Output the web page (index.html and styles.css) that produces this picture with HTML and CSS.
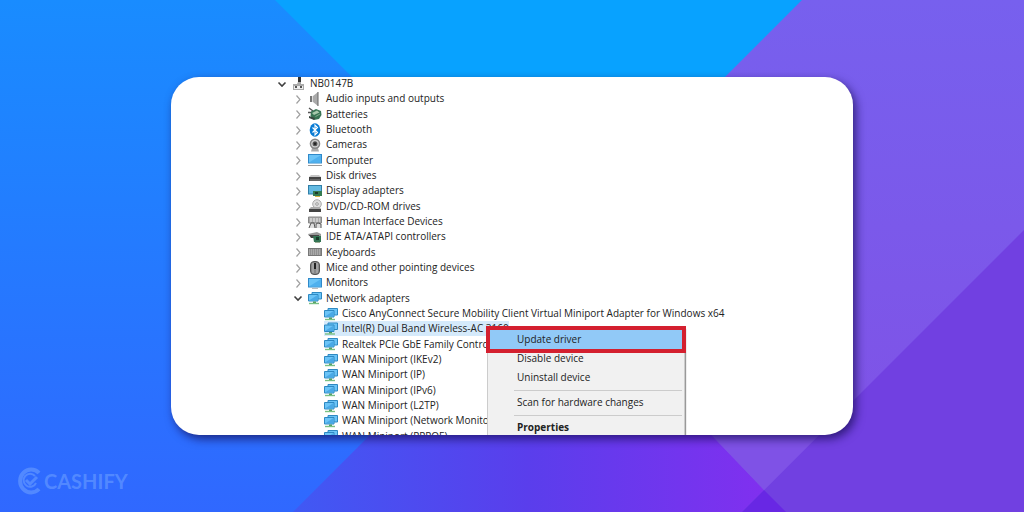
FILE: index.html
```html
<!DOCTYPE html>
<html lang="en">
<head>
  <meta charset="UTF-8" />
  <meta name="viewport" content="width=device-width, initial-scale=1.0" />
  <title>Device Manager - Update driver</title>
  <link rel="stylesheet" href="styles.css">
</head>
<body>
  <!-- Coloured backdrop -->
  <svg class="backdrop" viewBox="0 0 1024 512" preserveAspectRatio="none" aria-hidden="true">
    <defs>
      <linearGradient id="gLeft" x1="0" y1="0" x2="0" y2="1">
        <stop offset="0" stop-color="#198cff"/><stop offset="1" stop-color="#3068ff"/>
      </linearGradient>
      <linearGradient id="gRight" x1="0" y1="0" x2="0" y2="1">
        <stop offset="0" stop-color="#7760ee"/><stop offset="1" stop-color="#8050e5"/>
      </linearGradient>
      <linearGradient id="gBottom" gradientUnits="userSpaceOnUse" x1="293" y1="0" x2="763" y2="0">
        <stop offset="0" stop-color="#4059f4"/><stop offset="0.5" stop-color="#5a3eec"/><stop offset="1" stop-color="#8030ef"/>
      </linearGradient>
    </defs>
    <rect width="1024" height="512" fill="url(#gLeft)"/>
    <path d="M275 0H802L620 190H465Z" fill="#08a2ff"/>
    <path d="M802 0H1024V512H742L600 370V202Z" fill="url(#gRight)"/>
    <path d="M1024 230V512H742Z" fill="#7140e1"/>
    <path d="M293 512L405 400H678L764 490L742 512Z" fill="url(#gBottom)"/>
    <path d="M678 400H854L764 490Z" fill="#7f52e6"/>
    <path d="M764 490L786 512H742Z" fill="#6827e4"/>
  </svg>

  <!-- Device icons -->
  <svg class="sprite" aria-hidden="true">
    <symbol id="open" viewBox="0 0 12 12"><path d="M2.500 4.500L6 8L9.500 4.500" fill="none" stroke="#404040" stroke-width="1.600"/></symbol>
    <symbol id="closed" viewBox="0 0 12 12"><path d="M4.500 2.500L8 6.500L4.500 10.500" fill="none" stroke="#a0a0a0" stroke-width="1.200"/></symbol>
    <symbol id="pc" viewBox="0 0 14 14"><path d="M6 0H9V7H6Z" fill="#333"/><path d="M1 7H5L6 5H9V7H12V13H1Z" fill="#aaa"/><path d="M2 9H11V12H2Z" fill="#eee"/><path d="M3 9H5V11H3ZM8 9H10V11H8Z" fill="#555"/></symbol>
    <symbol id="audio" viewBox="0 0 14 14"><path d="M2 4H5V10H2Z" fill="#777"/><path d="M5 4L10 0V14L5 10Z" fill="#aaa"/><path d="M10 0V14" stroke="#666"/><path d="M4.500 4V10" stroke="#ddd"/></symbol>
    <symbol id="battery" viewBox="0 0 14 14"><path d="M1 1L5 4M0 5.500H4" stroke="#555" stroke-width="1.400"/><path d="M3 4.500L8 2L13 4L13.500 8L11 12L6 13L2.500 9Z" fill="#397454"/><path d="M4 6L9 3.500L11.500 5.500L6 8Z" fill="#a9c9ad"/><path d="M1 9L7 11L6 13L1 11Z" fill="#39463f"/><path d="M7.500 9.500L12 7" stroke="#83ad8c"/></symbol>
    <symbol id="bluetooth" viewBox="0 0 14 14"><ellipse cx="7" cy="7" rx="5.300" ry="6.800" fill="#087bd4"/><path d="M4.500 4.500L9.500 9.500L7 12V2L9.500 4.500L4.500 9.500" fill="none" stroke="#fff" stroke-width="1.100"/></symbol>
    <symbol id="camera" viewBox="0 0 14 14"><path d="M4 10H10L11 13.500H3Z" fill="#aaa"/><circle cx="7" cy="5.800" r="5.300" fill="#858585"/><circle cx="7" cy="5.800" r="3.800" fill="#d0d0d0"/><circle cx="7" cy="5.800" r="2.500" fill="#555"/><circle cx="7" cy="5.800" r="1.200" fill="#222"/></symbol>
    <symbol id="computer" viewBox="0 0 14 14"><path d="M0 1H14V10.500H0Z" fill="#3089c9"/><path d="M1 2H13V9.500H1Z" fill="#6bc4f7"/><path d="M1 9.500L13 2V9.500Z" fill="#4fb0ee"/><path d="M0 12.500H14" stroke="#999"/></symbol>
    <symbol id="disk" viewBox="0 0 14 14"><path d="M3 6H11L13 8H1Z" fill="#c5c5c5"/><path d="M1 8H13V12H1Z" fill="#444"/><path d="M2 11H12" stroke="#888"/></symbol>
    <symbol id="display" viewBox="0 0 14 14"><path d="M0 1H14V10.500H0Z" fill="#317fa8"/><path d="M1 2H13V9.500H1Z" fill="#63bae2"/><path d="M5 7H14V12H5Z" fill="#347b50"/><path d="M7 8H10V10H7Z" fill="#1d392a"/><path d="M7 12.500H12" stroke="#d5b545"/></symbol>
    <symbol id="dvd" viewBox="0 0 14 14"><circle cx="9" cy="5" r="4.300" fill="#ddd" stroke="#aaa"/><circle cx="9" cy="5" r="1.300" fill="#fff" stroke="#999"/><path d="M3 8H12L13 10H1Z" fill="#aaa"/><path d="M1 10H13V13H1Z" fill="#444"/></symbol>
    <symbol id="hid" viewBox="0 0 14 14"><path d="M.5 2H13.500V8H.5Z" fill="#aaa" stroke="#888"/><path d="M2 4H12M2 6H12" stroke="#eee" stroke-dasharray="2 1"/><path d="M1 13L3 8H6L7 13M8 13V9L10 8L13 9V13" fill="#ddd" stroke="#555"/></symbol>
    <symbol id="ide" viewBox="0 0 14 14"><path d="M0 4L9 2L13 4V6H1Z" fill="#999"/><path d="M1 5H11V8H3Z" fill="#444"/><path d="M5 6H13V12H6Z" fill="#347554"/><path d="M8 7H11V10H8Z" fill="#183a29"/><path d="M7 12.500H12" stroke="#9caf96"/></symbol>
    <symbol id="keyboard" viewBox="0 0 14 14"><path d="M0 3H14V11H0Z" fill="#777"/><path d="M1 5H13M1 7H13M1 9H13" stroke="#ddd" stroke-dasharray="1.500 .5"/></symbol>
    <symbol id="mouse" viewBox="0 0 14 14"><rect x="2.500" y=".5" width="9" height="13" rx="3.500" fill="#888" stroke="#555"/><path d="M5 2V12M9 2V12" stroke="#bbb"/><path d="M7 2V8" stroke="#222" stroke-width="2"/></symbol>
    <symbol id="monitor" viewBox="0 0 14 14"><path d="M0 2H14V11.500H0Z" fill="#3089c9"/><path d="M1 3H13V10.500H1Z" fill="#6bc4f7"/><path d="M1 10.500L13 3V10.500Z" fill="#4fb0ee"/><path d="M4 12.500H10" stroke="#bbb"/></symbol>
    <symbol id="network" viewBox="0 0 14 14"><path d="M4 1.500H13.500V8H4Z" fill="#6bc4f7" stroke="#2e89c2"/><path d="M.5 3.500H10V10H.5Z" fill="#6bc4f7" stroke="#2e89c2"/><path d="M1 9.500L9.500 4V9.500Z" fill="#4aa9e6"/><path d="M5 10.500H8V12H5Z" fill="#4c9b62"/><path d="M1 12.500H11" stroke="#7ac083" stroke-width="1.400"/></symbol>
  </svg>

  <main class="page">
    <section class="card">
      <ul class="tree">
        <li class="row root"><button class="toggle" aria-label="Collapse NB0147B"><svg><use href="#open"/></svg></button><svg class="icon"><use href="#pc"/></svg><span>NB0147B</span></li>
        <li class="row"><button class="toggle" aria-label="Expand Audio inputs and outputs"><svg><use href="#closed"/></svg></button><svg class="icon"><use href="#audio"/></svg><span>Audio inputs and outputs</span></li>
        <li class="row"><button class="toggle" aria-label="Expand Batteries"><svg><use href="#closed"/></svg></button><svg class="icon"><use href="#battery"/></svg><span>Batteries</span></li>
        <li class="row"><button class="toggle" aria-label="Expand Bluetooth"><svg><use href="#closed"/></svg></button><svg class="icon"><use href="#bluetooth"/></svg><span>Bluetooth</span></li>
        <li class="row"><button class="toggle" aria-label="Expand Cameras"><svg><use href="#closed"/></svg></button><svg class="icon"><use href="#camera"/></svg><span>Cameras</span></li>
        <li class="row"><button class="toggle" aria-label="Expand Computer"><svg><use href="#closed"/></svg></button><svg class="icon"><use href="#computer"/></svg><span>Computer</span></li>
        <li class="row"><button class="toggle" aria-label="Expand Disk drives"><svg><use href="#closed"/></svg></button><svg class="icon"><use href="#disk"/></svg><span>Disk drives</span></li>
        <li class="row"><button class="toggle" aria-label="Expand Display adapters"><svg><use href="#closed"/></svg></button><svg class="icon"><use href="#display"/></svg><span>Display adapters</span></li>
        <li class="row"><button class="toggle" aria-label="Expand DVD/CD-ROM drives"><svg><use href="#closed"/></svg></button><svg class="icon"><use href="#dvd"/></svg><span>DVD/CD-ROM drives</span></li>
        <li class="row"><button class="toggle" aria-label="Expand Human Interface Devices"><svg><use href="#closed"/></svg></button><svg class="icon"><use href="#hid"/></svg><span>Human Interface Devices</span></li>
        <li class="row"><button class="toggle" aria-label="Expand IDE ATA/ATAPI controllers"><svg><use href="#closed"/></svg></button><svg class="icon"><use href="#ide"/></svg><span>IDE ATA/ATAPI controllers</span></li>
        <li class="row"><button class="toggle" aria-label="Expand Keyboards"><svg><use href="#closed"/></svg></button><svg class="icon"><use href="#keyboard"/></svg><span>Keyboards</span></li>
        <li class="row"><button class="toggle" aria-label="Expand Mice and other pointing devices"><svg><use href="#closed"/></svg></button><svg class="icon"><use href="#mouse"/></svg><span>Mice and other pointing devices</span></li>
        <li class="row"><button class="toggle" aria-label="Expand Monitors"><svg><use href="#closed"/></svg></button><svg class="icon"><use href="#monitor"/></svg><span>Monitors</span></li>
        <li class="row"><button class="toggle" aria-label="Collapse Network adapters"><svg><use href="#open"/></svg></button><svg class="icon"><use href="#network"/></svg><span>Network adapters</span></li>
        <li class="row leaf"><svg class="icon"><use href="#network"/></svg><span>Cisco AnyConnect Secure Mobility Client Virtual Miniport Adapter for Windows x64</span></li>
        <li class="row leaf selected"><svg class="icon"><use href="#network"/></svg><span>Intel(R) Dual Band Wireless-AC 3160</span></li>
        <li class="row leaf"><svg class="icon"><use href="#network"/></svg><span>Realtek PCIe GbE Family Controller</span></li>
        <li class="row leaf"><svg class="icon"><use href="#network"/></svg><span>WAN Miniport (IKEv2)</span></li>
        <li class="row leaf"><svg class="icon"><use href="#network"/></svg><span>WAN Miniport (IP)</span></li>
        <li class="row leaf"><svg class="icon"><use href="#network"/></svg><span>WAN Miniport (IPv6)</span></li>
        <li class="row leaf"><svg class="icon"><use href="#network"/></svg><span>WAN Miniport (L2TP)</span></li>
        <li class="row leaf"><svg class="icon"><use href="#network"/></svg><span>WAN Miniport (Network Monitor)</span></li>
        <li class="row leaf"><svg class="icon"><use href="#network"/></svg><span>WAN Miniport (PPPOE)</span></li>
      </ul>

      <!-- Right click menu -->
      <div class="menu">
        <button class="menu-item active">Update driver</button>
        <button class="menu-item">Disable device</button>
        <button class="menu-item">Uninstall device</button>
        <hr>
        <button class="menu-item">Scan for hardware changes</button>
        <hr>
        <button class="menu-item default">Properties</button>
      </div>
    </section>
  </main>

  <div class="brand">
    <svg viewBox="0 0 26 28" aria-hidden="true">
      <path d="M22 6A11 11.500 0 1 0 22 22" fill="none" stroke="currentColor" stroke-width="4"/>
      <path d="M18 9A6.500 6.500 0 1 0 19 16" fill="none" stroke="currentColor" stroke-width="2"/>
      <path d="M9 13L13 17L20 10" fill="none" stroke="currentColor" stroke-width="3"/>
    </svg>
    <span>CASHIFY</span>
  </div>
</body>
</html>
```
FILE: styles.css
```css
* {
  box-sizing: border-box;
}
body {
  margin: 0;
  font-family: "Open Sans", "Noto Sans", sans-serif;
  font-size: 10px;
  color: #222;
  background: #198cff;
}
.backdrop {
  position: absolute;
  inset: 0;
  width: 100%;
  height: 100%;
  z-index: -1;
}
.sprite {
  display: none;
}
.page {
  display: flex;
  min-height: 100vh;
  padding: 77px 171px;
}
.card {
  position: relative;
  display: flex;
  flex: 1;
  background: #fff;
  border-radius: 28px;
  overflow: hidden;
  box-shadow: 3px 4px 10px rgba(20, 10, 80, 0.7);
}

/* Device tree */
.tree {
  display: flex;
  flex-direction: column;
  flex: 1;
  list-style: none;
  margin: -1px 0 -9px;
  padding: 0;
}
.row {
  display: flex;
  flex: 1;
  align-items: center;
  gap: 4px;
  padding-left: 121px;
  line-height: 15px;
  white-space: nowrap;
}
.root {
  padding-left: 105px;
}
.leaf {
  padding-left: 153px;
}
.icon {
  width: 14px;
  height: 14px;
  flex: none;
}
.toggle {
  width: 12px;
  height: 12px;
  padding: 0;
  border: none;
  background: none;
}
.toggle svg {
  display: block;
  width: 12px;
  height: 12px;
}
.selected {
  gap: 0;
}
.selected .icon,
.selected span {
  height: 15px;
  background: #d5eafb;
}
.selected span {
  padding-left: 4px;
}

/* Context menu */
.menu {
  position: absolute;
  left: 316px;
  top: 251px;
  width: 198px;
  padding: 2px;
  background: #f1f1f1;
  border: 1px solid #ccc;
  border-top: none;
  box-shadow: 1px 1px 1px #999;
}
.menu-item {
  display: block;
  width: 100%;
  height: 19px;
  padding: 0 0 1px 27px;
  border: none;
  background: none;
  font: inherit;
  color: #222;
  text-align: left;
}
.active {
  background: #91c9f7;
  outline: 4px solid #d4202f;
}
.default {
  font-weight: bold;
}
.menu hr {
  margin: 3px 0 2px 24px;
  border: none;
  border-top: 1px solid #ccc;
}

.brand {
  position: absolute;
  left: 17px;
  bottom: 17px;
  display: flex;
  align-items: center;
  gap: 1px;
  color: rgba(150, 195, 255, 0.35);
  font-family: Lato, sans-serif;
  font-size: 20px;
  font-weight: bold;
}
.brand svg {
  width: 26px;
  height: 28px;
}
```
